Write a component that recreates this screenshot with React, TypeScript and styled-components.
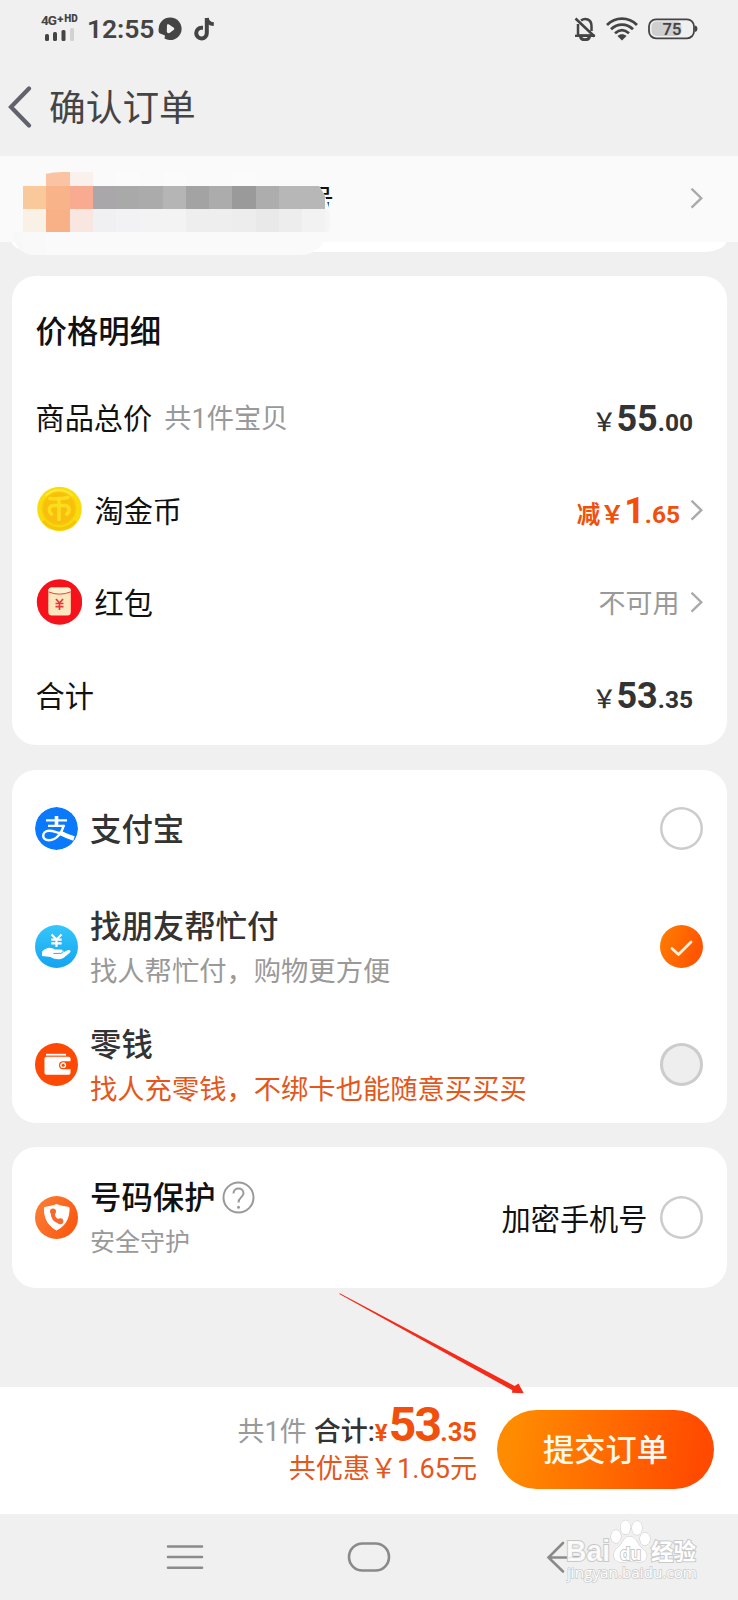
import React from 'react';
import styled, { createGlobalStyle } from 'styled-components';

const Global = createGlobalStyle`
  * { box-sizing: border-box; }
  body {
    margin: 0;
    background: #f0f0f0;
    font-family: Roboto, "Noto Sans CJK SC", sans-serif;
    color: #111;
  }
  svg { display: block; flex: none; }
`;

const Screen = styled.div`
  position: relative;
  width: 738px;
  height: 1600px;
  overflow: hidden;
  display: flex;
  flex-direction: column;
  background: #f0f0f0;
`;

/* ---------- status bar ---------- */

const StatusBar = styled.header`
  height: 58px;
  display: flex;
  align-items: center;
  padding: 0 40px 0 41px;
  color: #444;
`;

const Signal = styled.div`
  width: 39px;
  height: 28px;
  margin-right: 7px;
  margin-top: -3px;
  display: flex;
  flex-direction: column;
  gap: 1px;
`;

const Network = styled.div`
  display: flex;
  align-items: center;
  height: 13px;
  font-size: 13.5px;
  font-weight: 700;
  line-height: 13px;
  letter-spacing: -0.9px;
  white-space: nowrap;
`;

const NetworkMark = styled.span<{ $size: number; $gap?: number }>`
  font-size: ${(p) => p.$size}px;
  font-weight: 900;
  letter-spacing: 0;
  line-height: 10px;
  margin-left: ${(p) => p.$gap ?? 0}px;
  margin-bottom: 3px;
`;

const Clock = styled.div`
  width: 68px;
  font-size: 26.5px;
  font-weight: 600;
  line-height: 30px;
  letter-spacing: -0.1px;
  white-space: nowrap;
`;

const StatusIcons = styled.div<{ $gap: number; $left: number | 'auto' }>`
  display: flex;
  align-items: center;
  gap: ${(p) => p.$gap}px;
  margin-left: ${(p) => (p.$left === 'auto' ? 'auto' : `${p.$left}px`)};
`;

/* ---------- title bar ---------- */

const TitleBar = styled.div`
  height: 98px;
  display: flex;
  align-items: center;
  gap: 16px;
  padding: 0 0 0 8px;
`;

const Title = styled.h1`
  margin: 0;
  padding-top: 3px;
  font-size: 36.7px;
  font-weight: 400;
  line-height: 44px;
  color: #444;
`;

/* ---------- address strip ---------- */

const Address = styled.section`
  position: relative;
  height: 86px;
  background: #fafafa;
  display: flex;
  align-items: center;
  justify-content: flex-end;
  padding-right: 35px;
`;

const AddressLip = styled.div`
  height: 10px;
  margin: 0 12px;
  background: #fff;
  border-radius: 0 0 24px 24px / 0 0 10px 10px;
`;

const AddressTail = styled.div`
  position: absolute;
  left: 306px;
  top: 28px;
  height: 24px;
  overflow: hidden;
  font-size: 28px;
  line-height: 34px;
`;

const Mosaic = styled.div`
  position: absolute;
  left: 12px;
  top: 16px;
  width: 318px;
  height: 83px;
  overflow: hidden;
  border-radius: 52px 36px 30px 22px / 30px 50px 34px 26px;
  background: #fafafa;
  display: grid;
  grid-template-columns: 11px repeat(13, 23.25px) 5px;
  grid-template-rows: 14px 23px 23px 23px;
`;

const Tile = styled.i<{ $color: string }>`
  background: ${(p) => p.$color};
`;

/* ---------- cards ---------- */

const Card = styled.section<{ $height: number; $top: number }>`
  height: ${(p) => p.$height}px;
  margin: ${(p) => p.$top}px 11.5px 0;
  padding: 0 24px;
  background: #fff;
  border-radius: 24px;
  display: flex;
  flex-direction: column;
  flex: none;
`;

const CardTitle = styled.h2`
  margin: 0;
  height: 96px;
  padding-top: 36px;
  font-size: 31.4px;
  font-weight: 500;
  line-height: 42px;
`;

const PriceRow = styled.div`
  height: 92.5px;
  display: flex;
  align-items: center;
`;

const PriceLabel = styled.div<{ $indent?: number }>`
  font-size: 29.2px;
  line-height: 36px;
  padding-top: 2px;
  margin-left: ${(p) => p.$indent ?? 0}px;
  display: flex;
  align-items: center;
`;

const Count = styled.span`
  margin-left: 12px;
  font-size: 27.2px;
  color: #999;
`;

const CoinSlot = styled.div`
  padding-bottom: 4px;
`;

const PacketSlot = styled.div`
  padding-bottom: 2px;
`;

const Amount = styled.div<{ $accent?: boolean; $right: number }>`
  margin-left: auto;
  margin-right: ${(p) => p.$right}px;
  padding-top: 1px;
  font-size: 36px;
  font-weight: 700;
  line-height: 36px;
  white-space: nowrap;
  color: ${(p) => (p.$accent ? '#f0500c' : '#333')};
`;

const Small = styled.span<{ $weight?: number; $size?: number }>`
  font-size: ${(p) => p.$size ?? 24.5}px;
  font-weight: ${(p) => p.$weight ?? 700};
  line-height: 0;
`;

const Unavailable = styled.div`
  margin-left: auto;
  margin-right: 10px;
  padding-top: 1px;
  font-size: 27px;
  line-height: 36px;
  color: #999;
`;

/* ---------- option rows ---------- */

const OptionRow = styled.div`
  flex: 1;
  display: flex;
  align-items: center;
  margin-left: -0.5px;
`;

const OptionText = styled.div<{ $gap: number }>`
  flex: 1;
  margin-left: 12px;
  padding-top: 4px;
  display: flex;
  flex-direction: column;
  gap: ${(p) => p.$gap}px;
`;

const OptionName = styled.div<{ $color: string }>`
  display: flex;
  align-items: center;
  gap: 6px;
  font-size: 31.4px;
  font-weight: 500;
  line-height: 40px;
  color: ${(p) => p.$color};
`;

const HelpSlot = styled.span`
  padding-bottom: 3px;
`;

const OptionNote = styled.div<{ $color?: string; $size?: number }>`
  font-size: ${(p) => p.$size ?? 27.3}px;
  line-height: 34px;
  color: ${(p) => p.$color ?? '#999'};
`;

const Radio = styled.div<{ $disabled?: boolean }>`
  width: 43px;
  height: 43px;
  border-radius: 50%;
  box-shadow: inset 0 0 0 ${(p) => (p.$disabled ? 3 : 2.5)}px #ccc;
  background: ${(p) => (p.$disabled ? '#eee' : '#fff')};
`;

const RadioOn = styled.div`
  width: 43px;
  height: 43px;
  border-radius: 50%;
  background: linear-gradient(110deg, #ff7f00, #ff4c00);
`;

const EncryptLabel = styled.div`
  margin-right: 12px;
  padding-top: 4px;
  font-size: 29.2px;
  line-height: 36px;
`;

/* ---------- checkout bar ---------- */

const Checkout = styled.footer`
  height: 127px;
  margin-top: 99px;
  padding: 0 24px 2px 0;
  background: #fff;
  display: flex;
  align-items: center;
  justify-content: flex-end;
  gap: 20px;
  flex: none;
`;

const Totals = styled.div`
  display: flex;
  flex-direction: column;
  align-items: flex-end;
  padding-bottom: 10px;
  white-space: nowrap;
`;

const TotalLine = styled.div`
  height: 48px;
  font-size: 48px;
  font-weight: 700;
  line-height: 46px;
  color: #f0500c;
  letter-spacing: -1.7px;
`;

const TotalPart = styled.span<{ $color?: string; $weight?: number; $size?: number; $gap?: number }>`
  font-size: ${(p) => p.$size ?? 27}px;
  font-weight: ${(p) => p.$weight ?? 400};
  line-height: 0;
  letter-spacing: 0;
  color: ${(p) => p.$color ?? 'inherit'};
  margin-right: ${(p) => p.$gap ?? 0}px;
`;

const Saved = styled.div`
  font-size: 27.1px;
  line-height: 38px;
  color: #e4571c;
`;

const Submit = styled.button`
  width: 217px;
  height: 79px;
  border: 0;
  padding: 2px 0 0;
  border-radius: 40px;
  background: linear-gradient(100deg, #ff8c00 8%, #ff4a00 92%);
  color: #fff8ec;
  font-family: inherit;
  font-size: 31.2px;
  font-weight: 500;
  line-height: 40px;
`;

/* ---------- system navigation ---------- */

const NavBar = styled.nav`
  position: relative;
  height: 86px;
  display: flex;
  align-items: center;
  padding-left: 166px;
  flex: none;
`;

const NavSlot = styled.div<{ $gap: number }>`
  margin-left: ${(p) => p.$gap}px;
`;

const Watermark = styled.div`
  position: absolute;
  left: 566px;
  top: 5px;
  width: 134px;
  height: 70px;
`;

const Pointer = styled.svg`
  position: absolute;
  left: 336px;
  top: 1290px;
`;

const Chevron = () => (
  <svg width="13" height="22" viewBox="0 0 13 22" fill="none" stroke="#aaa" strokeWidth="2.4">
    <path d="M1.5 1.5 11.3 11 1.5 20.5" transform="translate(0 -0.8)" />
  </svg>
);

const mosaicRows = [
  ['#fafafa', '#fafafa', '#fac4a4', '#fbf1ec', '#fafafa', '#fbfbfb', '#fafafa', '#fbfbfb', '#fafafa', '#fafafa', '#fbfbfb', '#fafafa', '#fafafa', '#fafafa', '#fafafa'],
  ['#fafafa', '#f9c89b', '#f8b488', '#f9ab91', '#a9a7a9', '#a9a9a9', '#ababab', '#b5b5b5', '#a3a3a3', '#acacac', '#9a9a9a', '#adadad', '#b7b7b7', '#b7b7b7', '#fafafa'],
  ['#fafafa', '#f9f0e6', '#f8b186', '#fae6e0', '#f0f0f2', '#f2f2f4', '#f3f3f3', '#f3f3f3', '#eeeeee', '#eeeeee', '#ededed', '#e9e9e9', '#ededed', '#f2f2f2', '#f5f5f5'],
  ['#f8f8f9', '#f9f9fa', '#fafafa', '#fafafa', '#fafafa', '#fafafa', '#fafafa', '#fafafa', '#fafafa', '#fafafa', '#fafafa', '#fafafa', '#fafafa', '#fafafa', '#fafafa'],
];

const CoinIcon = () => (
  <svg width="46" height="46" viewBox="0 0 46 46">
    <circle cx="23.5" cy="23" r="22.3" fill="#fadb0c" />
    <path d="M7.500 35A20.500 20.500 0 0 0 39.500 35" fill="none" stroke="#f4c60a" strokeWidth="3" />
    <path d="M10 10A18.500 18.500 0 0 1 36 10" fill="none" stroke="#ffe838" strokeWidth="3" />
    <circle cx="23" cy="22.500" r="16.500" fill="#f9bf0e" stroke="#f6cc0c" strokeWidth="1.500" />
    <g fill="none" stroke="#fcdd1c" strokeWidth="3.600" strokeLinecap="round" strokeLinejoin="round">
      <path d="M14 12.500C20 13 26 12.600 32 11.500" />
      <path d="M15.500 28C12 25.500 13 19.500 17.500 19.500H29C33.500 19.500 34.500 25.500 31 28" />
      <path d="M23 13V33.500" />
    </g>
  </svg>
);

const PacketIcon = () => (
  <svg width="46" height="46" viewBox="0 0 46 46">
    <circle cx="23.500" cy="23" r="22.700" fill="#f5121b" />
    <rect x="12.300" y="8.500" width="22.500" height="28" rx="3.500" fill="#fbe6bd" />
    <path d="M12.500 10.500Q12.700 8.500 15.500 8.500H31.500Q34.500 8.500 34.700 10.500V12.800Q23.500 17.300 12.500 12.800Z" fill="#fff0d2" />
    <path d="M12.300 12.800Q23.500 17.500 34.800 12.800" fill="none" stroke="#dd4a35" strokeWidth="1" />
    <path d="M20 20 23.500 24 27 20M23.500 24V31M19.500 24.500H27.500M19.500 27.700H27.500" fill="none" stroke="#e03a3c" strokeWidth="1.700" />
  </svg>
);

const AlipayIcon = () => (
  <svg width="43" height="43" viewBox="0 0 43 43">
    <defs>
      <clipPath id="alipayDisc"><circle cx="21.500" cy="21.500" r="21.500" /></clipPath>
    </defs>
    <g clipPath="url(#alipayDisc)">
      <circle cx="21.500" cy="21.500" r="21.500" fill="#0b79fb" />
      <g fill="none" stroke="#fff">
        <path d="M11 13.300H32" strokeWidth="2.200" />
        <path d="M21.500 9V18.500" strokeWidth="3.600" />
        <path d="M13 18.900H29.500" strokeWidth="2.200" />
        <path d="M29 18C27 25 22 33.300 14 33.300C6 33.300 6.500 24 14 23.800C20 23.600 29 28 38 31.500" strokeWidth="2.500" />
        <path d="M25 25.800Q31 29 39 31.500" strokeWidth="4.600" />
      </g>
    </g>
  </svg>
);

const FriendPayIcon = () => (
  <svg width="43" height="43" viewBox="0 0 43 43">
    <defs>
      <linearGradient id="friendSky" x1="0" y1="0" x2="0" y2="1">
        <stop offset="0" stopColor="#35c6fa" />
        <stop offset="1" stopColor="#14a4f0" />
      </linearGradient>
    </defs>
    <circle cx="21.500" cy="21.500" r="21.500" fill="url(#friendSky)" />
    <path d="M16.500 9.500 21.500 14.500 26.500 9.500M21.500 14.500V22M16.300 14.700H26.700M16.300 18.300H26.700" fill="none" stroke="#fff" strokeWidth="2.200" />
    <path d="M7 26.500C12 21.500 16 22 20 24.500H25.500C28 24.500 29 26 29 27L33 25C35.500 24.500 36.500 26 34.500 28L29 32.500C26 35 20 34.800 15.500 32L7 31Z" fill="#fff" />
    <path d="M18.500 28.500 26 28.300C28 27.800 28.500 26.500 27.500 25.500" fill="none" stroke="#2bb0f2" strokeWidth="1" />
  </svg>
);

const WalletIcon = () => (
  <svg width="43" height="43" viewBox="0 0 43 43">
    <circle cx="21.500" cy="21.500" r="21.500" fill="#fc4a06" />
    <path d="M11 11.700H31" stroke="#fff" strokeWidth="1.800" />
    <rect x="9.500" y="13.800" width="26" height="18" rx="1.800" fill="#fff" />
    <path d="M36 18.300H28A4 4 0 0 0 28 26.300H36Z" fill="#fc4a06" />
    <circle cx="28.200" cy="22.200" r="2.900" fill="#fff" />
    <circle cx="28.200" cy="22.200" r="1.500" fill="#fc4a06" />
  </svg>
);

const ShieldIcon = () => (
  <svg width="43" height="43" viewBox="0 0 43 43">
    <defs>
      <linearGradient id="shieldFill" x1="0" y1="0" x2="1" y2="0.500">
        <stop offset="0" stopColor="#fc8038" />
        <stop offset="1" stopColor="#fa5a12" />
      </linearGradient>
    </defs>
    <circle cx="21.500" cy="21.500" r="21.500" fill="url(#shieldFill)" />
    <path d="M9.500 11.500C14.500 10.500 18 10 21.500 8.500C25 10 29 10.500 34 11.500C34.500 20 31.500 29.500 21.500 34C12 29.500 9 20 9.500 11.500Z" fill="#fff" stroke="#fff" strokeLinejoin="round" />
    <path d="M18 16.200C17.200 20.800 19.800 25 25 25.500" fill="none" stroke="#f8682a" strokeWidth="4" />
    <circle cx="18" cy="15.600" r="3" fill="#f8682a" />
    <circle cx="25.300" cy="25.300" r="3" fill="#f8682a" />
  </svg>
);

const HelpIcon = () => (
  <svg width="33" height="33" viewBox="0 0 33 33" fill="none" stroke="#999" strokeWidth="2">
    <circle cx="16.500" cy="16.500" r="15" />
    <path d="M11.500 12.500C11.500 5.800 21.500 6 21.500 12.300C21.500 16 16.500 16.500 16.500 21.500" />
    <circle cx="16.500" cy="26.300" r="1.500" fill="#999" stroke="none" />
  </svg>
);

export default function App() {
  return (
    <>
      <Global />
      <Screen>
        <StatusBar>
          <Signal>
            <Network>
              4G<NetworkMark $size={11.5} $gap={1}>+</NetworkMark>
              <NetworkMark $size={10} $gap={1}>HD</NetworkMark>
            </Network>
            <svg width="36" height="14" viewBox="0 0 36 14" fill="#444">
              <rect x="4" y="6" width="4" height="7" rx="1.500" />
              <rect x="12" y="4" width="4" height="9" rx="1.500" />
              <rect x="20.500" y="2" width="4" height="11" rx="1.500" />
              <rect x="29" y="0" width="4" height="13" rx="1.500" fill="#d2d2d2" />
            </svg>
          </Signal>
          <Clock>12:55</Clock>
          <StatusIcons $gap={12} $left={3}>
            <svg width="24" height="24" viewBox="0 0 24 24">
              <path d="M12 .5A11.300 11.300 0 1 1 6.500 21.500L7 18.500L2 16.500C.5 15.500.4 13.500.7 11.500A11.300 11.300 0 0 1 12 .5Z" fill="#444" />
              <path d="M9 8C9 7 10 7 11 7.400L15.500 10.500C16.500 11.300 16.500 12.200 15.500 13L11.500 16C10 16.500 8.500 15.500 8.800 14Z" fill="#f0f0f0" />
            </svg>
            <svg width="21" height="24" viewBox="0 0 21 24" fill="none" stroke="#444" strokeWidth="4">
              <path d="M12.800 1V16A5.300 5.300 0 1 1 7.500 10.800H9" />
              <path d="M12.800 1C13.300 4.500 16 7 19.800 7.200" strokeWidth="3.800" />
            </svg>
          </StatusIcons>
          <StatusIcons $gap={10} $left="auto">
            <svg width="22" height="24" viewBox="0 0 22 24" fill="none" stroke="#444" strokeWidth="2.500">
              <path d="M4 7V18.500H18V17M7 3.500C11 .5 17.500 2 17.500 9V14" />
              <path d="M1 18.800H21" strokeWidth="2.300" />
              <path d="M6.500 19.500C7 23.800 15 23.800 15.500 19.500" strokeWidth="3" />
              <path d="M1.500 1.500 20.500 19.500" strokeWidth="2.600" />
            </svg>
            <svg width="32" height="24" viewBox="0 0 32 24" fill="none" stroke="#444" strokeWidth="2.700">
              <path d="M1 8C9.500-.5 22.500-.5 31 8" />
              <path d="M5 12.300C11.500 6 20.500 6 27 12.300" />
              <path d="M9 16.300C13.500 12.300 18.500 12.300 23 16.300" />
              <path d="M11.500 19C14 16.800 18 16.800 20.500 19L16 23.500Z" fill="#444" stroke="none" />
            </svg>
            <svg width="50" height="22" viewBox="0 0 50 22">
              <rect x="3.500" y="3.500" width="30" height="14.500" rx="5" fill="#cfcfcf" />
              <rect x="1" y="1.300" width="45" height="19" rx="7" fill="none" stroke="#444" strokeWidth="1.800" />
              <path d="M47 7.500Q49.500 8 49.500 10.700T47 14Z" fill="#444" />
              <text x="14.500" y="16.500" fontSize="16.500" fontWeight="600" fontFamily="Roboto, sans-serif" fill="#444">75</text>
            </svg>
          </StatusIcons>
        </StatusBar>

        <TitleBar>
          <svg width="25" height="42" viewBox="0 0 25 42" fill="none" stroke="#62626c" strokeWidth="4.200" strokeLinecap="round">
            <path d="M21 2.500 3 21 21 39.500" />
          </svg>
          <Title>确认订单</Title>
        </TitleBar>

        <Address>
          <AddressTail>号</AddressTail>
          <Mosaic>
            {mosaicRows.flatMap((row, y) => row.map((color, x) => <Tile key={`${y}-${x}`} $color={color} />))}
          </Mosaic>
          <Chevron />
        </Address>
        <AddressLip />

        <Card $height={469} $top={24}>
          <CardTitle>价格明细</CardTitle>
          <PriceRow>
            <PriceLabel>商品总价<Count>共1件宝贝</Count></PriceLabel>
            <Amount $right={9.5}><Small $weight={500}>￥</Small>55<Small>.00</Small></Amount>
          </PriceRow>
          <PriceRow>
            <CoinSlot><CoinIcon /></CoinSlot>
            <PriceLabel $indent={13}>淘金币</PriceLabel>
            <Amount $accent $right={9.5}><Small $size={23.5}>减</Small><Small $size={24}>￥</Small>1<Small>.65</Small></Amount>
            <Chevron />
          </PriceRow>
          <PriceRow>
            <PacketSlot><PacketIcon /></PacketSlot>
            <PriceLabel $indent={13}>红包</PriceLabel>
            <Unavailable>不可用</Unavailable>
            <Chevron />
          </PriceRow>
          <PriceRow>
            <PriceLabel>合计</PriceLabel>
            <Amount $right={9.5}><Small $weight={500}>￥</Small>53<Small>.35</Small></Amount>
          </PriceRow>
        </Card>

        <Card $height={353} $top={25}>
          <OptionRow>
            <AlipayIcon />
            <OptionText $gap={0}>
              <OptionName $color="#333">支付宝</OptionName>
            </OptionText>
            <Radio />
          </OptionRow>
          <OptionRow>
            <FriendPayIcon />
            <OptionText $gap={7}>
              <OptionName $color="#333">找朋友帮忙付</OptionName>
              <OptionNote>找人帮忙付，购物更方便</OptionNote>
            </OptionText>
            <RadioOn>
              <svg width="43" height="43" viewBox="0 0 43 43" fill="none" stroke="#fff3e0" strokeWidth="2.800" strokeLinecap="round" strokeLinejoin="round">
                <path d="M12 23.500 18.500 29.500 31 17" />
              </svg>
            </RadioOn>
          </OptionRow>
          <OptionRow>
            <WalletIcon />
            <OptionText $gap={7}>
              <OptionName $color="#333">零钱</OptionName>
              <OptionNote $color="#e4571c">找人充零钱，不绑卡也能随意买买买</OptionNote>
            </OptionText>
            <Radio $disabled />
          </OptionRow>
        </Card>

        <Card $height={141} $top={24}>
          <OptionRow>
            <ShieldIcon />
            <OptionText $gap={7}>
              <OptionName $color="#111">号码保护<HelpSlot><HelpIcon /></HelpSlot></OptionName>
              <OptionNote $size={25}>安全守护</OptionNote>
            </OptionText>
            <EncryptLabel>加密手机号</EncryptLabel>
            <Radio />
          </OptionRow>
        </Card>

        <Checkout>
          <Totals>
            <TotalLine>
              <TotalPart $color="#999" $gap={7}>共1件</TotalPart>
              <TotalPart $color="#333" $weight={500}>合计:</TotalPart>
              <TotalPart $weight={700} $size={24} $gap={1}>¥</TotalPart>
              53
              <TotalPart $weight={700} $size={25.5}>.35</TotalPart>
            </TotalLine>
            <Saved>共优惠￥1.65元</Saved>
          </Totals>
          <Submit>提交订单</Submit>
        </Checkout>

        <NavBar>
          <NavSlot $gap={0}>
            <svg width="38" height="26" viewBox="0 0 38 26" stroke="#8a8a8a" strokeWidth="2.600" strokeLinecap="round">
              <path d="M2 2.500H36M2 13H36M2 23.700H36" />
            </svg>
          </NavSlot>
          <NavSlot $gap={143}>
            <svg width="44" height="32" viewBox="0 0 44 32" fill="none" stroke="#8a8a8a" strokeWidth="2.600">
              <rect x="2" y="2.500" width="40" height="27" rx="13.500" />
            </svg>
          </NavSlot>
          <NavSlot $gap={155}>
            <svg width="36" height="34" viewBox="0 0 36 34" fill="none" stroke="#8a8a8a" strokeWidth="2.600" strokeLinecap="round">
              <path d="M17 3 2.500 17.500 17 31.500M2.500 17.500H34" />
            </svg>
          </NavSlot>
          <Watermark>
            <svg width="134" height="70" viewBox="0 0 134 70" stroke="#c9c9c9" strokeWidth="1" fill="#fff" paintOrder="stroke">
              <text x="0" y="42" fontSize="30" fontWeight="700" fontFamily="'Liberation Sans', sans-serif" textLength="44" lengthAdjust="spacingAndGlyphs" strokeWidth="2" fillOpacity="0.850">Bai</text>
              <ellipse cx="50" cy="17.500" rx="5" ry="6.500" />
              <ellipse cx="59.500" cy="8.300" rx="5" ry="7" />
              <ellipse cx="71" cy="9" rx="5" ry="7" />
              <ellipse cx="79" cy="20" rx="5" ry="6.500" />
              <path d="M64 17.500C70 17.500 71 25 76 29.500C83 34 82 43 74 43C70 43 67 42 64 42C61 42 58 44 54 43C46 42 46 32 53 27.500C57 24 58 17.500 64 17.500Z" />
              <text x="54" y="40.500" fontSize="19" fontWeight="700" fontFamily="'Liberation Sans', sans-serif" textLength="21" lengthAdjust="spacingAndGlyphs" strokeWidth="2">du</text>
              <text x="85" y="40.500" fontSize="22.500" fontWeight="700" fontFamily="'Noto Sans CJK SC', sans-serif" strokeWidth="2">经验</text>
              <text x="1" y="59" fontSize="15" fontFamily="'Open Sans', sans-serif" textLength="130" lengthAdjust="spacingAndGlyphs" strokeWidth="1.400">jingyan.baidu.com</text>
            </svg>
          </Watermark>
        </NavBar>

        <Pointer width="192" height="108" viewBox="336 1290 192 108">
          <path d="M339.300 1294 339.800 1293.200 514.700 1386 518.500 1383.500 523.800 1393.200 512 1392.800 512.300 1390.200Z" fill="#f52a18" />
        </Pointer>
      </Screen>
    </>
  );
}
